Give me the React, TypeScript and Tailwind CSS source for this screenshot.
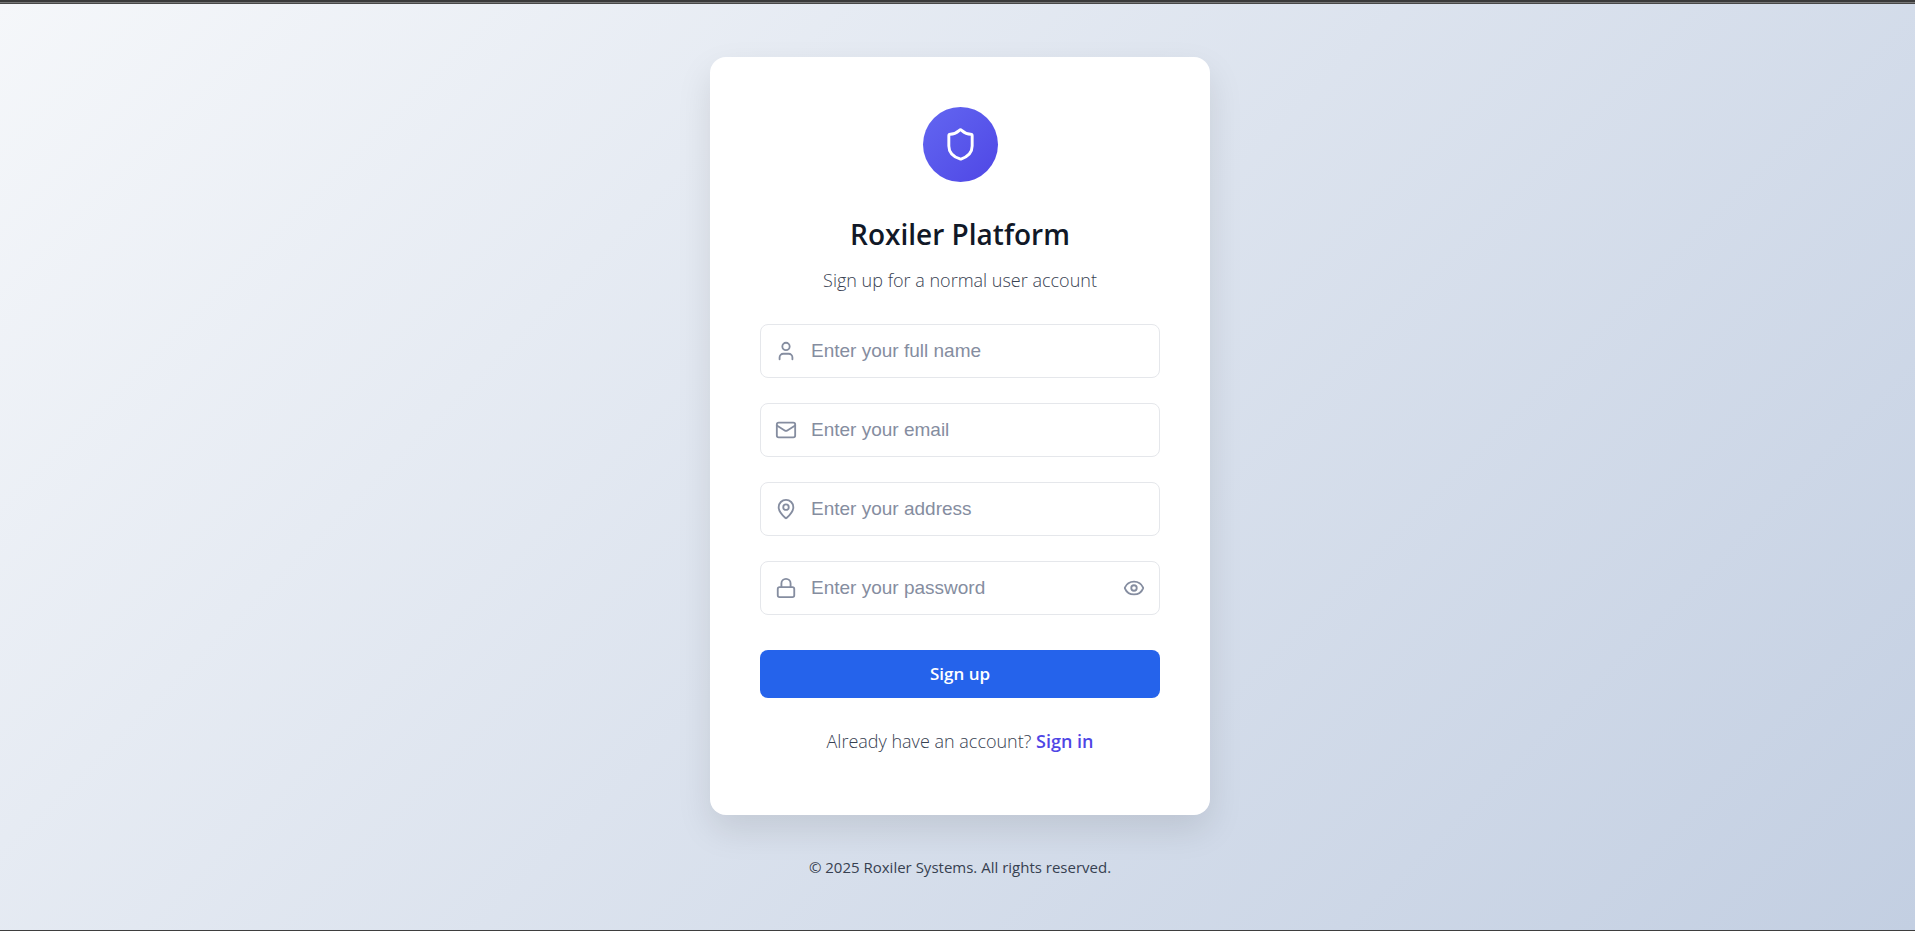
import { useState } from "react";
import type { ReactNode } from "react";
import { Eye, EyeOff, Lock, Mail, MapPin, Shield, User } from "lucide-react";

type FieldProps = {
  id: string;
  label: string;
  type: string;
  icon: ReactNode;
  children?: ReactNode;
};

function Field({ id, label, type, icon, children }: FieldProps) {
  return (
    <div className="flex h-[54px] items-center rounded-lg border border-[#e5e7eb] bg-white px-3.5 text-[#858da0] focus-within:border-indigo-500">
      <label htmlFor={id} className="mr-3.5 shrink-0">
        {icon}
      </label>
      <input
        id={id}
        type={type}
        aria-label={label}
        placeholder={label}
        className="h-full min-w-0 flex-1 bg-transparent font-['Liberation_Sans',Arial,sans-serif] text-[19px] text-slate-800 outline-none placeholder:text-[#858da0]"
      />
      {children}
    </div>
  );
}

export default function App() {
  const [visible, setVisible] = useState(false);

  return (
    <div className="flex min-h-screen flex-col border-b border-b-[#3e3e3e] bg-linear-135 from-[#f5f7fa] to-[#c3cfe2] font-['Open_Sans','Noto_Sans',sans-serif]">
      <div className="h-1 border-t-2 border-b border-t-[#3a3a3a] border-b-[#484848] bg-[#777777]" />
      <main className="flex flex-1 flex-col items-center justify-center pt-[42px] pr-4 pb-10 pl-[21px]">
        <section className="w-full max-w-[500px] rounded-2xl bg-white p-[50px] shadow-[0_15px_35px_rgba(0,0,0,0.1)]">
          <div className="mx-auto flex size-[75px] items-center justify-center rounded-full bg-linear-135 from-[#6366f1] to-[#4f46e5] text-white">
            <Shield size={35} strokeWidth={2} />
          </div>
          <h1 className="mt-8 text-center text-[28px] leading-10 font-semibold text-[#111827]">
            Roxiler Platform
          </h1>
          <p className="mt-3.5 text-center text-lg leading-6 font-light text-[#374151]">
            Sign up for a normal user account
          </p>
          <form className="mt-8 flex flex-col gap-[25px]" onSubmit={(e) => e.preventDefault()}>
            <Field id="name" type="text" label="Enter your full name" icon={<User size={22} strokeWidth={2} />} />
            <Field id="email" type="email" label="Enter your email" icon={<Mail size={22} strokeWidth={2} />} />
            <Field id="address" type="text" label="Enter your address" icon={<MapPin size={22} strokeWidth={2} />} />
            <Field
              id="password"
              type={visible ? "text" : "password"}
              label="Enter your password"
              icon={<Lock size={22} strokeWidth={2} />}
            >
              <button
                type="button"
                aria-label={visible ? "Hide password" : "Show password"}
                onClick={() => setVisible(!visible)}
              >
                {visible ? <EyeOff size={22} strokeWidth={2} /> : <Eye size={22} strokeWidth={2} />}
              </button>
            </Field>
            <button
              type="submit"
              className="mt-2.5 h-12 rounded-lg bg-[#2563eb] text-[17px] font-semibold text-white"
            >
              Sign up
            </button>
          </form>
          <p className="mt-[31px] mb-3 text-center text-lg leading-6 font-light text-[#374151]">
            Already have an account?{" "}
            <a href="#signin" className="font-semibold text-[#4f46e5]">
              Sign in
            </a>
          </p>
        </section>
        <footer className="mt-10 text-center text-[15px] leading-6 text-[#374151]">
          © 2025 Roxiler Systems. All rights reserved.
        </footer>
      </main>
    </div>
  );
}
